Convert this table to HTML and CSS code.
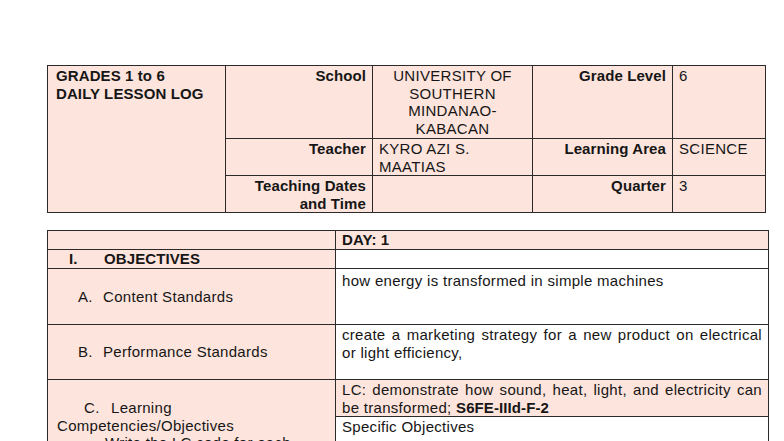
FILE: index.html
```html
<!DOCTYPE html>
<html lang="en">
<head>
<meta charset="utf-8">
<title>Daily Lesson Log</title>
<link rel="stylesheet" href="styles.css">
</head>
<body>
<div class="page">
  <table class="head">
    <colgroup>
      <col class="c1"><col class="c2"><col class="c3"><col class="c4"><col class="c5">
    </colgroup>
    <tr class="r1">
      <td rowspan="3" class="title">GRADES 1 to 6<br>DAILY LESSON LOG</td>
      <td class="label">School</td>
      <td class="value center">UNIVERSITY OF SOUTHERN MINDANAO-KABACAN</td>
      <td class="label">Grade Level</td>
      <td class="value">6</td>
    </tr>
    <tr class="r2">
      <td class="label">Teacher</td>
      <td class="value">KYRO AZI S. MAATIAS</td>
      <td class="label">Learning Area</td>
      <td class="value">SCIENCE</td>
    </tr>
    <tr class="r3">
      <td class="label">Teaching Dates and Time</td>
      <td class="value"></td>
      <td class="label">Quarter</td>
      <td class="value">3</td>
    </tr>
  </table>

  <table class="plan">
    <colgroup>
      <col class="p1"><col class="p2">
    </colgroup>
    <tr class="day">
      <td class="pink"></td>
      <td class="pink bold cell-tight">DAY: 1</td>
    </tr>
    <tr class="obj">
      <td class="pink bold"><span class="roman">I.</span>OBJECTIVES</td>
      <td class="white"></td>
    </tr>
    <tr class="std">
      <td class="pink mid"><span class="mark">A.</span>Content Standards</td>
      <td class="white cell">how energy is transformed in simple machines</td>
    </tr>
    <tr class="perf">
      <td class="pink mid"><span class="mark">B.</span>Performance Standards</td>
      <td class="white cell just">create a marketing strategy for a new product on electrical or light efficiency,</td>
    </tr>
    <tr class="lc">
      <td class="pink comp" rowspan="2">
        <p class="comp-title"><span class="markc">C.</span>Learning Competencies/Objectives</p>
        <p class="comp-note">Write the LC code for each</p>
      </td>
      <td class="pink cell just">LC: demonstrate how sound, heat, light, and electricity can be transformed; <b>S6FE-IIId-F-2</b></td>
    </tr>
    <tr class="spec">
      <td class="white cell">Specific Objectives</td>
    </tr>
  </table>
</div>
</body>
</html>
```

FILE: styles.css
```css
html, body {
  margin: 0;
  padding: 0;
  background: #ffffff;
}

body {
  font-family: "Liberation Sans", Arial, sans-serif;
  font-size: 15px;
  line-height: 17.6px;
  letter-spacing: 0.3px;
  color: #161616;
}

b, .bold, .title, .label {
  letter-spacing: 0.1px;
}

.page {
  padding: 65px 0 40px 47px;
}

table {
  border-collapse: collapse;
  table-layout: fixed;
}

td {
  border: 1px solid #2a2a2a;
  padding: 0;
  vertical-align: top;
}

/* header table */
.head {
  width: 718px;
  background: #fde4dc;
}
.c1 { width: 178px; }
.c2 { width: 147px; }
.c3 { width: 160px; }
.c4 { width: 140px; }
.c5 { width: 93px; }

.head .r1 { height: 73px; }
.head .r2 { height: 37px; }
.head .r3 { height: 36px; }

.head td {
  padding: 1px 6px 0 6px;
}

.title {
  font-weight: bold;
  padding-left: 8px !important;
}

.label {
  font-weight: bold;
  text-align: right;
}

.value {
  text-align: left;
}

.center {
  text-align: center;
}

/* lesson plan table */
.plan {
  width: 721px;
  margin-top: 17px;
}
.p1 { width: 288px; }
.p2 { width: 433px; }

.pink { background: #fde4dc; }
.white { background: #ffffff; }
.bold { font-weight: bold; }

.plan .day { height: 18px; }
.plan .obj { height: 19px; }
.plan .std { height: 56px; }
.plan .perf { height: 55px; }
.plan .lc { height: 36px; }
.plan .spec { height: 90px; }

.cell-tight {
  padding: 0 6px;
}

.cell {
  padding: 1px 6px 0 6px;
}
.std .cell { padding-top: 3px; }
.lc .cell { padding-top: 1px; }
.spec .cell { padding-top: 1px; }

.just {
  text-align: justify;
}

.roman {
  display: inline-block;
  margin-left: 21px;
  width: 35px;
}

.mid {
  vertical-align: middle;
}

.mark {
  display: inline-block;
  margin-left: 30px;
  width: 25px;
}

.comp {
  padding: 19px 8px 0 9px;
}

.comp p {
  margin: 0;
}

.markc {
  display: inline-block;
  margin-left: 27px;
  width: 27px;
}

.comp-note {
  padding-left: 48px;
}
```
